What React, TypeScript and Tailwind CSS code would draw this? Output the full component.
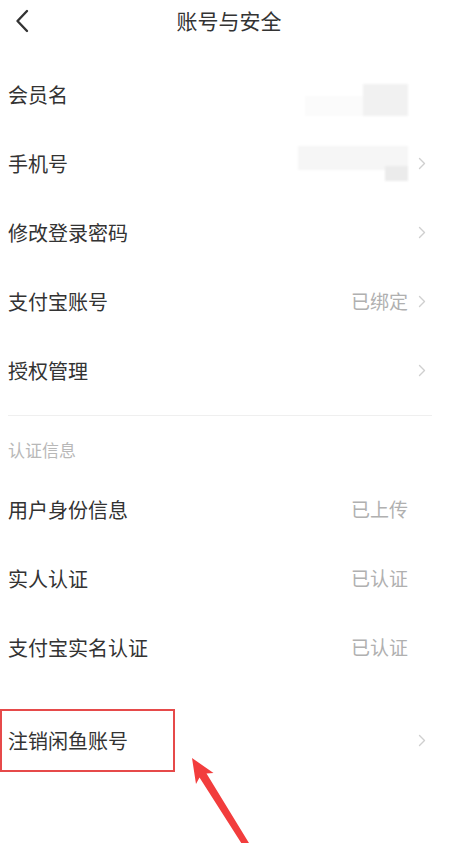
import type { ReactNode } from "react";

function Chevron() {
  return (
    <svg width="8" height="13" viewBox="0 0 8 13" fill="none">
      <path d="M1.5 1.5 L6.5 6.5 L1.5 11.5" stroke="#cfcfcf" strokeWidth="1.4" strokeLinecap="round" strokeLinejoin="round" />
    </svg>
  );
}

function Row({ label, value, arrow = true, children }: { label: string; value?: ReactNode; arrow?: boolean; children?: ReactNode }) {
  return (
    <div className="relative flex h-[69px] items-center pl-2 pr-[20px]">
      <span className="flex-1 text-[20px] text-[#333]">{label}</span>
      {value ? <div className="mr-[2px] flex items-center text-[19px] text-[#b0b0b0]">{value}</div> : null}
      <div className="flex w-[20px] items-center pl-2">{arrow ? <Chevron /> : null}</div>
      {children}
    </div>
  );
}

export default function App() {
  return (
    <div className="relative h-[843px] overflow-hidden bg-white font-['Noto_Sans_CJK_SC','Noto_Sans',sans-serif]">
      <div className="grid h-[42px] grid-cols-[60px_1fr_60px] items-center">
        <div className="pl-[15px]">
          <svg width="14" height="24" viewBox="0 0 14 24" fill="none">
            <path d="M12 2 L2.5 12 L12 22" stroke="#333" strokeWidth="2.4" strokeLinecap="round" strokeLinejoin="round" />
          </svg>
        </div>
        <h1 className="pl-2 text-center text-[21px] text-[#333]">账号与安全</h1>
        <div />
      </div>

      <div className="pt-[18px]">
        <Row
          label="会员名"
          arrow={false}
          value={
            <div className="flex items-end pt-[10px] blur-[1px]">
              <div className="h-[20px] w-[58px] bg-[#fbfbfb]" />
              <div className="h-[32px] w-[45px] bg-[#f1f1f1]" />
            </div>
          }
        />
        <Row
          label="手机号"
          value={
            <div className="flex flex-col items-end blur-[1px]">
              <div className="h-[24px] w-[110px] bg-[#f6f6f6]" />
              <div className="-mt-[4px] h-[15px] w-[23px] bg-[#ebebeb]" />
            </div>
          }
        />
        <Row label="修改登录密码" />
        <Row label="支付宝账号" value="已绑定" />
        <Row label="授权管理" />
      </div>

      <div className="ml-2 mr-[18px] mt-[10px] h-px bg-[#efefef]" />

      <div className="flex h-[59px] items-center pl-2 pt-2 text-[17px] text-[#b8b8b8]">认证信息</div>

      <Row label="用户身份信息" value="已上传" arrow={false} />
      <Row label="实人认证" value="已认证" arrow={false} />
      <Row label="支付宝实名认证" value="已认证" arrow={false} />

      <div className="mt-[24px]">
        <Row label="注销闲鱼账号">
          <div className="absolute bottom-[3px] left-0 top-[3px] w-[175px] border-2 border-[#e64a4a]" />
        </Row>
      </div>

      <svg className="absolute left-0 top-0" width="450" height="843" viewBox="0 0 450 843">
        <polygon
          points="192,758 213.5,773 206.5,773.5 253,849.6 247.5,852.8 199.5,777.5 196,784"
          fill="#f23d3d"
        />
      </svg>
    </div>
  );
}
